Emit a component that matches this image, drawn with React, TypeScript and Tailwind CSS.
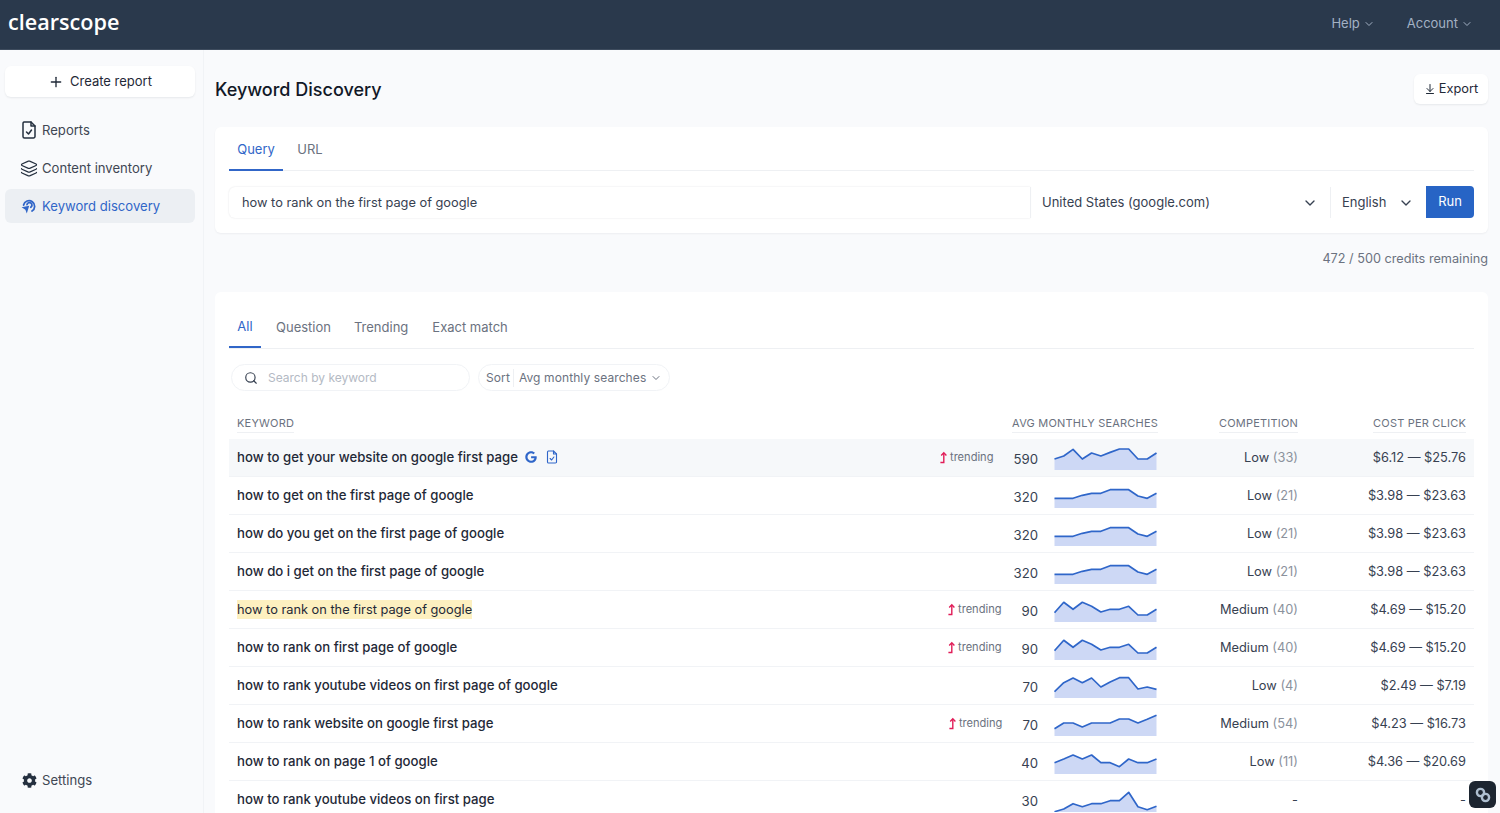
import { ArrowDownToLine, ChevronDown, Layers, Plus, Search } from 'lucide-react'
import { FaCog, FaGoogle } from 'react-icons/fa'

type Row = {
  keyword: string
  trending?: boolean
  volume: string
  spark: number[]
  competition: string
  score: string
  cpc: string
}

const spark320 = [9.7, 9.7, 9.7, 12.7, 14.7, 14.7, 18.3, 18.3, 18.3, 12, 9.7, 14.7]
const spark90 = [9.3, 19.7, 12.7, 19.7, 15.7, 10, 12.7, 12.7, 15.7, 7, 7, 12.7]

const rows: Row[] = [
  { keyword: 'how to get your website on google first page', trending: true, volume: '590', spark: [11, 14, 20.6, 11, 17, 14, 17.6, 21, 21, 11, 11, 17], competition: 'Low', score: '(33)', cpc: '$6.12 — $25.76' },
  { keyword: 'how to get on the first page of google', volume: '320', spark: spark320, competition: 'Low', score: '(21)', cpc: '$3.98 — $23.63' },
  { keyword: 'how do you get on the first page of google', volume: '320', spark: spark320, competition: 'Low', score: '(21)', cpc: '$3.98 — $23.63' },
  { keyword: 'how do i get on the first page of google', volume: '320', spark: spark320, competition: 'Low', score: '(21)', cpc: '$3.98 — $23.63' },
  { keyword: 'how to rank on the first page of google', trending: true, volume: '90', spark: spark90, competition: 'Medium', score: '(40)', cpc: '$4.69 — $15.20' },
  { keyword: 'how to rank on first page of google', trending: true, volume: '90', spark: spark90, competition: 'Medium', score: '(40)', cpc: '$4.69 — $15.20' },
  { keyword: 'how to rank youtube videos on first page of google', volume: '70', spark: [6.3, 15.3, 20, 15.3, 20, 11, 16, 20.3, 20.3, 9, 11, 8.7], competition: 'Low', score: '(4)', cpc: '$2.49 — $7.19' },
  { keyword: 'how to rank website on google first page', trending: true, volume: '70', spark: [7.3, 13, 13, 9, 13, 13, 13, 17, 17, 13, 16.7, 20.7], competition: 'Medium', score: '(54)', cpc: '$4.23 — $16.73' },
  { keyword: 'how to rank on page 1 of google', volume: '40', spark: [11.3, 15, 19, 15, 19, 11.3, 11.3, 7.3, 15, 11.3, 11.3, 15], competition: 'Low', score: '(11)', cpc: '$4.36 — $20.69' },
  { keyword: 'how to rank youtube videos on first page', volume: '30', spark: [0.3, 3, 8.3, 5.3, 8.3, 8.3, 11.3, 11.3, 19.7, 5.3, 2.3, 5.7], competition: '-', score: '', cpc: '-' },
]

function ReportIcon({ className }: { className?: string }) {
  return (
    <svg viewBox="0 0 16 18" fill="none" stroke="currentColor" strokeWidth="1.5" strokeLinejoin="round" strokeLinecap="round" className={className}>
      <path d="M3 1h7l4 4v10.5a1.5 1.5 0 0 1-1.5 1.5h-9A1.5 1.5 0 0 1 2 15.5v-13A1.5 1.5 0 0 1 3 1z" />
      <path d="M10 1v4h4" />
      <path d="M5.5 11l2 2 3-4" />
    </svg>
  )
}

function DiscoveryIcon({ className }: { className?: string }) {
  return (
    <svg viewBox="0 0 16 16" fill="none" stroke="currentColor" strokeWidth="1.8" strokeLinecap="round" className={className}>
      <path d="M2.6 7a5.6 5.6 0 1 1 8.4 6" />
      <path d="M6 6.6a2.5 2.5 0 1 1 3.8 2.6" />
      <path d="M0.6 9.2l7.6-1.4-2.4 7.6-1.4-3.6z" fill="currentColor" stroke="none" />
    </svg>
  )
}

function TrendArrow() {
  return (
    <svg viewBox="0 0 8 12" fill="none" stroke="#e11d58" strokeWidth="1.4" className="h-[13px] w-2">
      <path d="M0.4 11h3.4V1.5" />
      <path d="M1.2 3.9L3.8 1.2l2.6 2.7" />
    </svg>
  )
}

function Sparkline({ values }: { values: number[] }) {
  const points = values.map((h, i) => `${(i * 102) / 11 + 0.5},${24 - h}`).join(' ')
  return (
    <svg viewBox="0 0 103 24" className="h-6 w-[103px] shrink-0">
      <polygon points={`0.5,24 ${points} 102.5,24`} fill="#cdd8f5" />
      <polyline points={points} fill="none" stroke="#2f66c9" strokeWidth="1.7" strokeLinejoin="round" />
    </svg>
  )
}

function NavItem({ icon, label, active }: { icon: React.ReactNode; label: string; active?: boolean }) {
  return (
    <div
      className={`flex h-[34px] items-center gap-1 rounded-md pl-[15px] text-[13.1px] ${
        active ? 'bg-[#eceff3] text-[#3166c8]' : 'text-[#3f4753]'
      }`}
    >
      <span className="flex w-[18px] justify-center">{icon}</span>
      <span className="pt-[2px]">{label}</span>
    </div>
  )
}

export default function App() {
  return (
    <div className="relative flex h-[813px] flex-col overflow-hidden bg-[#f9fafc] font-['Inter',sans-serif] text-[13px] text-[#1f2937]">
      <header className="flex h-[50px] shrink-0 items-center justify-between border-b border-[#3e4c5e] bg-[#2a394c] pr-[27px] pl-2">
        <span className="-mt-[5px] font-['Open_Sans',sans-serif] text-[21.6px] leading-none font-semibold text-white">clearscope</span>
        <div className="-mt-[2px] flex items-center gap-[32px] text-[13px] text-[#a3b1c4]">
          <span className="flex items-center gap-[3px]">Help <ChevronDown className="h-3 w-3" /></span>
          <span className="flex items-center gap-[3px]">Account <ChevronDown className="h-3 w-3" /></span>
        </div>
      </header>

      <div className="flex min-h-0 flex-1">
        <aside className="flex w-[204px] shrink-0 flex-col border-r border-[#f1f3f6] pt-4 pr-2 pb-4 pl-[5px]">
          <button className="flex h-[31px] items-center justify-center gap-[6px] rounded-md bg-white text-[13px] text-[#1f2937] shadow-[0_1px_2px_rgba(15,23,42,0.08)]">
            <Plus className="h-4 w-4" strokeWidth={2} />
            Create report
          </button>
          <nav className="mt-4 flex flex-col gap-1">
            <NavItem icon={<ReportIcon className="h-[18px] w-4 text-[#25303f]" />} label="Reports" />
            <NavItem icon={<Layers className="h-[19px] w-[19px] text-[#25303f]" strokeWidth={1.6} />} label="Content inventory" />
            <NavItem icon={<DiscoveryIcon className="h-4 w-4" />} label="Keyword discovery" active />
          </nav>
          <div className="mt-auto">
            <NavItem icon={<FaCog className="h-[15px] w-[15px] text-[#25303f]" />} label="Settings" />
          </div>
        </aside>

        <main className="min-w-0 flex-1 pt-6 pr-3 pl-[11px]">
          <div className="flex h-[30px] items-center justify-between">
            <h1 className="text-[18px] font-medium text-[#111827]">Keyword Discovery</h1>
            <button className="flex h-[30px] w-[74px] items-center justify-center gap-[3px] rounded-md bg-white text-[12.8px] text-[#1f2937] shadow-[0_1px_2px_rgba(15,23,42,0.08)]">
              <ArrowDownToLine className="h-3 w-3" />
              Export
            </button>
          </div>

          <section className="mt-[23px] h-[106px] rounded-md bg-white px-[14px] shadow-[0_1px_2px_rgba(15,23,42,0.05)]">
            <div className="flex h-[44px] border-b border-[#eef0f3]">
              <span className="flex h-[44px] w-[54px] items-center justify-center border-b-2 border-[#3166c8] pt-[3px] text-[13px] text-[#3166c8]">Query</span>
              <span className="flex h-[44px] w-[54px] items-center justify-center pt-[2px] text-[13px] text-[#6b7280]">URL</span>
            </div>
            <div className="mt-[15px] flex h-[32px] items-stretch pt-[1px] text-[13px] text-[#374151]">
              <div className="flex w-[801px] items-center rounded-l-md pl-[13px] text-[12.8px] shadow-[0_0_2px_rgba(15,23,42,0.12)]">how to rank on the first page of google</div>
              <div className="flex w-[301px] items-center justify-between border-x border-[#eef0f3] pr-3 pl-[11px]">
                United States (google.com)
                <ChevronDown className="h-4 w-4" />
              </div>
              <div className="flex w-[95px] items-center justify-between pr-3 pl-[11px]">
                English
                <ChevronDown className="h-4 w-4" />
              </div>
              <button className="-mt-[1px] w-[48px] rounded-r bg-[#2764c5] text-[13px] text-white">Run</button>
            </div>
          </section>

          <p className="mt-[17px] text-right text-[12.7px] leading-[18px] text-[#6b7280]">472 / 500 credits remaining</p>

          <section className="mt-6 rounded-md bg-white px-[14px] pt-4">
            <div className="flex h-[41px] items-stretch border-b border-[#eef0f3] text-[13px] text-[#6b7280]">
              <span className="flex w-[32px] items-center justify-center border-b-2 border-[#3166c8] text-[#3166c8]">All</span>
              <span className="ml-[15px] flex items-center">Question</span>
              <span className="ml-[23px] flex items-center">Trending</span>
              <span className="ml-[24px] flex items-center">Exact match</span>
            </div>

            <div className="mt-[15px] flex h-[27px] items-stretch gap-2 pl-[2px] text-[12px] whitespace-nowrap">
              <div className="flex w-[239px] items-center gap-[10px] rounded-full border border-[#f1f3f6] pl-3 text-[#b4bac4]">
                <Search className="h-[14px] w-[14px] text-[#374151]" />
                Search by keyword
              </div>
              <div className="flex w-[192px] items-center rounded-full border border-[#f1f3f6] pl-[7px] tracking-[0.1px] text-[#6b7280]">
                <span className="border-r border-[#eef0f3] pr-[3px]">Sort</span>
                <span className="ml-[5px]">Avg monthly searches</span>
                <ChevronDown className="ml-[4px] h-3 w-3" />
              </div>
            </div>

            <div className="mt-6 flex h-6 items-start px-2 text-[11px] leading-[17px] tracking-[0.2px] text-[#6b7280]">
              <span className="flex-1"><span className="inline-block border-b border-[#eef0f3]">KEYWORD</span></span>
              <span className="w-[147px] text-right"><span className="inline-block border-b border-[#eef0f3]">AVG MONTHLY SEARCHES</span></span>
              <span className="w-[140px] text-right"><span className="inline-block border-b border-[#eef0f3]">COMPETITION</span></span>
              <span className="w-[168px] text-right"><span className="inline-block border-b border-[#eef0f3]">COST PER CLICK</span></span>
            </div>

            <div>
              {rows.map((row, i) => (
                <div key={row.keyword} className={`flex h-[38px] items-center border-b border-[#f1f3f6] px-2 ${i === 0 ? 'bg-[#f6f8fa]' : ''}`}>
                  <div className="flex min-w-0 flex-1 items-center">
                    <span className={i === 4 ? 'bg-[#fdf0c0] text-[12.8px] text-[#1f2937]' : 'text-[13.2px] font-medium text-[#1f2937]'}>{row.keyword}</span>
                    {i === 0 && (
                      <span className="ml-[7px] flex items-center gap-[9px] text-[#2f66c9]">
                        <FaGoogle className="h-3 w-3" />
                        <ReportIcon className="h-[14px] w-3" />
                      </span>
                    )}
                  </div>
                  <div className="flex items-center justify-end">
                    {row.trending && (
                      <span className="mr-5 flex items-center gap-[2px] text-[11.1px] text-[#6b7280]">
                        <TrendArrow />
                        trending
                      </span>
                    )}
                    <span className="pt-[5px] text-[13.2px] text-[#374151]">{row.volume}</span>
                  </div>
                  <div className="ml-4"><Sparkline values={row.spark} /></div>
                  <div className="w-[141px] text-right text-[12.8px] text-[#374151]">
                    {row.competition} <span className="text-[#8b929d]">{row.score}</span>
                  </div>
                  <div className="w-[168px] text-right text-[12.8px] text-[#374151]">{row.cpc}</div>
                </div>
              ))}
            </div>
          </section>
        </main>
      </div>

      <div className="absolute right-[4px] bottom-[5px] flex h-[27px] w-[27px] items-center justify-center rounded-md bg-[#1c2530]">
        <svg viewBox="0 0 20 20" fill="none" stroke="#aebfd0" strokeWidth="2.4" className="h-5 w-5">
          <circle cx="7.5" cy="7.5" r="3.6" />
          <circle cx="12.5" cy="12.5" r="3.6" />
        </svg>
      </div>
    </div>
  )
}
